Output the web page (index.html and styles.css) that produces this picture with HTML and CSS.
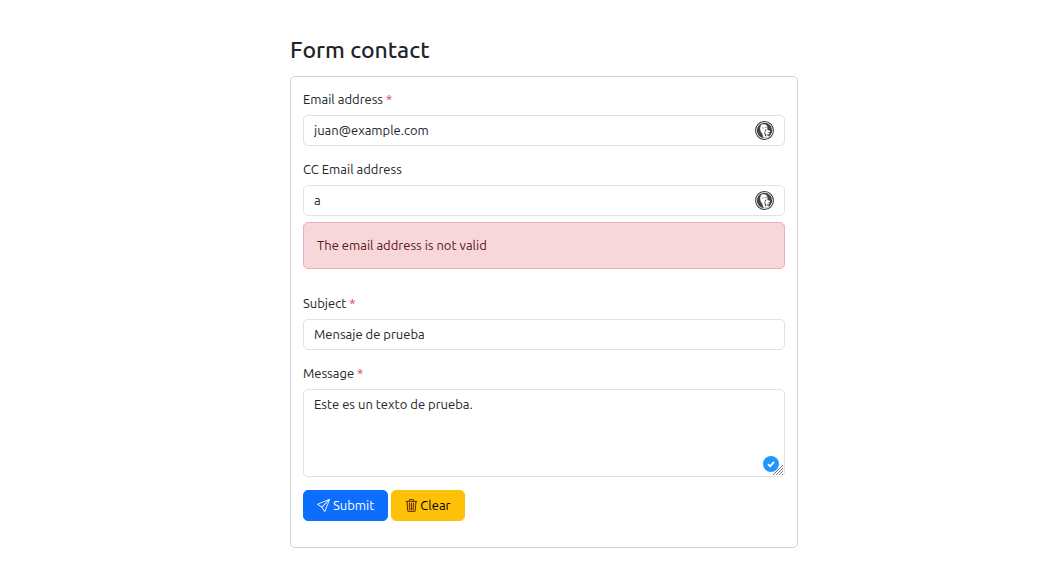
FILE: index.html
```html
<!DOCTYPE html>
<html lang="en">
<head>
<meta charset="utf-8">
<meta name="viewport" content="width=device-width, initial-scale=1">
<title>Form contact</title>
<link rel="stylesheet" href="styles.css">
</head>
<body>
<svg class="symbols" aria-hidden="true">
  <symbol id="duck" viewBox="0 0 20 20">
    <circle cx="10" cy="10" r="9.400" fill="#fff" stroke="#3d3d3d" stroke-width="1.100"/>
    <circle cx="10" cy="10" r="8.100" fill="#444"/>
    <path d="M6.200 4.600L7.500 3.300 10 3.400c2 .3 3 1.800 3.100 3.600v2.600l2.700.6v1.300l-3 .8 2.300.4-.3 1.200-2.400.2-.2 1 2.300.3-.2 1.700-2 .6H9L7.600 13.500 6 11 5.300 8z" fill="#fff"/>
    <path d="M10.600 9.300h1.700l-1.500 1.700v1.800l.9 1.700v2l-1-.6-.8-3zM8 6.800h1v1.100H8zM11 6.400h1v1h-1z" fill="#444"/>
  </symbol>
</svg>
<main class="page">
  <h1 class="title">Form contact</h1>
  <form class="card">
    <div class="field">
      <label class="label" for="email">Email address <span class="required">*</span></label>
      <div class="control">
        <input class="input" id="email" type="text" value="juan@example.com">
        <svg class="duck" aria-hidden="true"><use href="#duck"/></svg>
      </div>
    </div>
    <div class="field field-error">
      <label class="label" for="cc">CC Email address</label>
      <div class="control">
        <input class="input" id="cc" type="text" value="a">
        <svg class="duck" aria-hidden="true"><use href="#duck"/></svg>
      </div>
      <div class="alert" role="alert">The email address is not valid</div>
    </div>
    <div class="field">
      <label class="label" for="subject">Subject <span class="required">*</span></label>
      <input class="input" id="subject" type="text" value="Mensaje de prueba">
    </div>
    <div class="field">
      <label class="label" for="message">Message <span class="required">*</span></label>
      <div class="control">
        <textarea class="input message" id="message" spellcheck="false">Este es un texto de prueba.</textarea>
        <svg class="grip" viewBox="0 0 12 12" aria-hidden="true"><path d="M1 11L11 1M4 11l7-7M7 11l4-4M10 11l1-1" fill="none" stroke="#777" stroke-width="1"/></svg>
        <svg class="check" viewBox="0 0 16 16" aria-hidden="true"><circle cx="8" cy="8" r="8" fill="#2196fd"/><path d="M5 8.200l2.200 2.100L11 5.900" fill="none" stroke="#fff" stroke-width="1.800"/></svg>
      </div>
    </div>
    <div class="actions">
      <button class="button submit" type="button">
        <svg class="icon" viewBox="0 0 16 16" fill="currentColor" aria-hidden="true"><path d="M15.854.146a.5.5 0 0 1 .11.54l-5.819 14.547a.75.75 0 0 1-1.329.124l-3.178-4.995L.643 7.184a.75.75 0 0 1 .124-1.330L15.314.037a.5.5 0 0 1 .54.110ZM6.636 10.070l2.761 4.338L14.130 2.576zm6.787-8.201L1.591 6.602l4.339 2.760z"/></svg>
        Submit
      </button>
      <button class="button clear" type="button">
        <svg class="icon trash" viewBox="0 0 16 16" fill="currentColor" aria-hidden="true"><path d="M6.500 1h3a.5.5 0 0 1 .5.5v1H6v-1a.5.5 0 0 1 .5-.5M11 2.500v-1A1.500 1.500 0 0 0 9.500 0h-3A1.500 1.500 0 0 0 5 1.500v1H1.500a.5.5 0 0 0 0 1h.538l.853 10.660A2 2 0 0 0 4.885 16h6.230a2 2 0 0 0 1.994-1.840l.853-10.660h.538a.5.5 0 0 0 0-1zm1.958 1-.846 10.580a1 1 0 0 1-.997.920h-6.230a1 1 0 0 1-.997-.920L3.042 3.500zm-7.487 1a.5.5 0 0 1 .528.470l.5 8.500a.5.5 0 0 1-.998.060L5 5.030a.5.5 0 0 1 .470-.530Zm5.058 0a.5.5 0 0 1 .470.530l-.5 8.500a.5.5 0 1 1-.998-.060l.5-8.500a.5.5 0 0 1 .528-.470M8 4.500a.5.5 0 0 1 .5.5v8.500a.5.5 0 0 1-1 0V5a.5.5 0 0 1 .5-.5"/></svg>
        Clear
      </button>
    </div>
  </form>
</main>
</body>
</html>
```
FILE: styles.css
```css
* {
  box-sizing: border-box;
}

body {
  margin: 0;
  background: #fff;
  color: #212529;
  font: 13px/20px Ubuntu, "Noto Sans", sans-serif;
}

.symbols {
  position: absolute;
  width: 0;
  height: 0;
}

.page {
  padding: 36px 248px 26px 290px;
}

.title {
  margin: 0 0 12px;
  font-size: 23px;
  line-height: 28px;
  font-weight: 500;
}

.card {
  padding: 12px 12px 26px;
  border: 1px solid #d0d1d2;
  border-radius: 5px;
}

.field {
  display: flex;
  flex-direction: column;
  gap: 6px;
  margin-bottom: 13px;
}

.field-error {
  margin-bottom: 24px;
}

.required {
  color: #dc3545;
}

.control {
  position: relative;
  display: flex;
}

.input {
  display: block;
  width: 100%;
  padding: 4px 10px;
  border: 1px solid #dee2e6;
  border-radius: 5px;
  background: #fff;
  color: inherit;
  font: inherit;
  line-height: 21px;
}

.message {
  height: 88px;
  resize: none;
}

.duck {
  position: absolute;
  top: 6px;
  right: 11px;
  width: 19px;
  height: 19px;
}

.grip {
  position: absolute;
  right: 1px;
  bottom: 1px;
  width: 12px;
  height: 12px;
}

.check {
  position: absolute;
  right: 6px;
  bottom: 5px;
  width: 16px;
  height: 16px;
}

.alert {
  padding: 13px;
  border: 1px solid #f1aeb5;
  border-radius: 5px;
  background: #f8d7da;
  color: #58151c;
  line-height: 19px;
}

.actions {
  display: flex;
  gap: 3px;
}

.button {
  display: flex;
  align-items: center;
  gap: 3px;
  padding: 5px 13px;
  border: 1px solid;
  border-radius: 5px;
  font: inherit;
  line-height: 19px;
}

.submit {
  border-color: #0d6efd;
  background: #0d6efd;
  color: #fff;
}

.clear {
  gap: 2px;
  border-color: #ffc107;
  background: #ffc107;
  color: #000;
}

.icon {
  width: 13px;
  height: 13px;
}

.trash {
  color: #5a2000;
  stroke: currentColor;
  stroke-width: 0.2;
}
```
